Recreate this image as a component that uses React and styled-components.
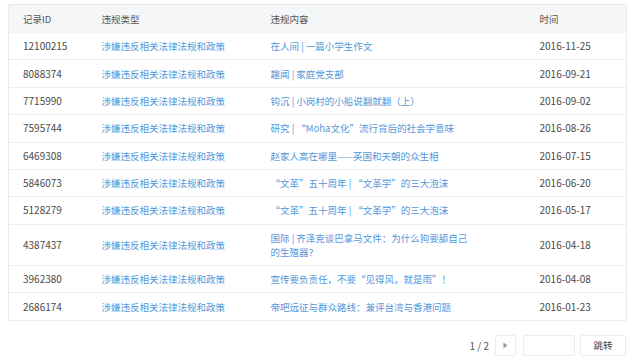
import React from "react";
import styled, { createGlobalStyle } from "styled-components";

const Global = createGlobalStyle`
  html, body { margin: 0; padding: 0; background: #fff; }
  body { font-family: "Noto Sans CJK SC", "Noto Sans", sans-serif; }
`;

const Page = styled.div`
  padding: 4px 14px 0 8px;
  width: 618px;
`;

const Table = styled.table`
  width: 618px;
  border-collapse: collapse;
  table-layout: fixed;
  border: 1px solid #e9e9e9;
  font-size: 9.5px;
  line-height: 14px;
`;

const Col = styled.col``;

const Th = styled.th`
  background: #f5f6f8;
  color: #555;
  font-weight: normal;
  text-align: left;
  padding: 7px 0 7px 14px;
  height: 14px;
`;

const Tr = styled.tr`
  border-bottom: 1px solid #ededed;
`;

const Td = styled.td`
  padding: 6.2px 0 6.2px 14px;
  color: ${(p) => (p.$link ? "#5297db" : "#4a4a4a")};
  vertical-align: middle;
  font-size: ${(p) => (p.$num ? "10px" : "9.5px")};
`;

const Content = styled.div`
  max-width: 204px;
`;

const Pager = styled.div`
  display: flex;
  justify-content: flex-end;
  align-items: center;
  margin-top: 14px;
  font-size: 10px;
  color: #555;
`;

const PageInfo = styled.span`
  margin-right: 6px;
`;

const Arrow = styled.div`
  width: 19px;
  height: 19px;
  border: 1px solid #ececec;
  border-radius: 2px;
  display: flex;
  align-items: center;
  justify-content: center;
  margin-right: 7px;
`;

const Input = styled.input`
  width: 50px;
  height: 19px;
  border: 1px solid #ececec;
  border-radius: 2px;
  box-sizing: content-box;
  padding: 0;
  margin: 0 5px 0 0;
  outline: none;
`;

const Button = styled.button`
  width: 46px;
  height: 21px;
  border: 1px solid #ececec;
  border-radius: 2px;
  background: #fff;
  font-family: "Noto Sans CJK SC", sans-serif;
  font-size: 9.5px;
  color: #444;
  padding: 0;
`;

const rows = [
  ["12100215", "在人间 | 一篇小学生作文", "2016-11-25"],
  ["8088374", "趣闻 | 家庭党支部", "2016-09-21"],
  ["7715990", "钩沉 | 小岗村的小船说翻就翻（上）", "2016-09-02"],
  ["7595744", "研究 | “Moha文化”流行背后的社会学意味", "2016-08-26"],
  ["6469308", "赵家人高在哪里——英国和天朝的众生相", "2016-07-15"],
  ["5846073", "“文革”五十周年 | “文革学”的三大泡沫", "2016-06-20"],
  ["5128279", "“文革”五十周年 | “文革学”的三大泡沫", "2016-05-17"],
  ["4387437", "国际 | 齐泽克谈巴拿马文件：为什么狗要舔自己的生殖器？", "2016-04-18"],
  ["3962380", "宣传要负责任，不要“见得风，就是雨”！", "2016-04-08"],
  ["2686174", "帝吧远征与群众路线：兼评台湾与香港问题", "2016-01-23"],
];

export default function App() {
  return (
    <Page>
      <Global />
      <Table>
        <colgroup>
          <Col style={{ width: 79 }} />
          <Col style={{ width: 169 }} />
          <Col style={{ width: 269 }} />
          <Col style={{ width: 101 }} />
        </colgroup>
        <thead>
          <tr>
            <Th>记录ID</Th>
            <Th>违规类型</Th>
            <Th>违规内容</Th>
            <Th>时间</Th>
          </tr>
        </thead>
        <tbody>
          {rows.map((r) => (
            <Tr key={r[0]}>
              <Td $num>{r[0]}</Td>
              <Td $link>涉嫌违反相关法律法规和政策</Td>
              <Td $link>
                <Content>{r[1]}</Content>
              </Td>
              <Td $num>{r[2]}</Td>
            </Tr>
          ))}
        </tbody>
      </Table>
      <Pager>
        <PageInfo>1 / 2</PageInfo>
        <Arrow>
          <svg width="5" height="7" viewBox="0 0 5 7">
            <path d="M0.5 0.5 L4.5 3.5 L0.5 6.5 Z" fill="#999" />
          </svg>
        </Arrow>
        <Input />
        <Button>跳转</Button>
      </Pager>
    </Page>
  );
}
